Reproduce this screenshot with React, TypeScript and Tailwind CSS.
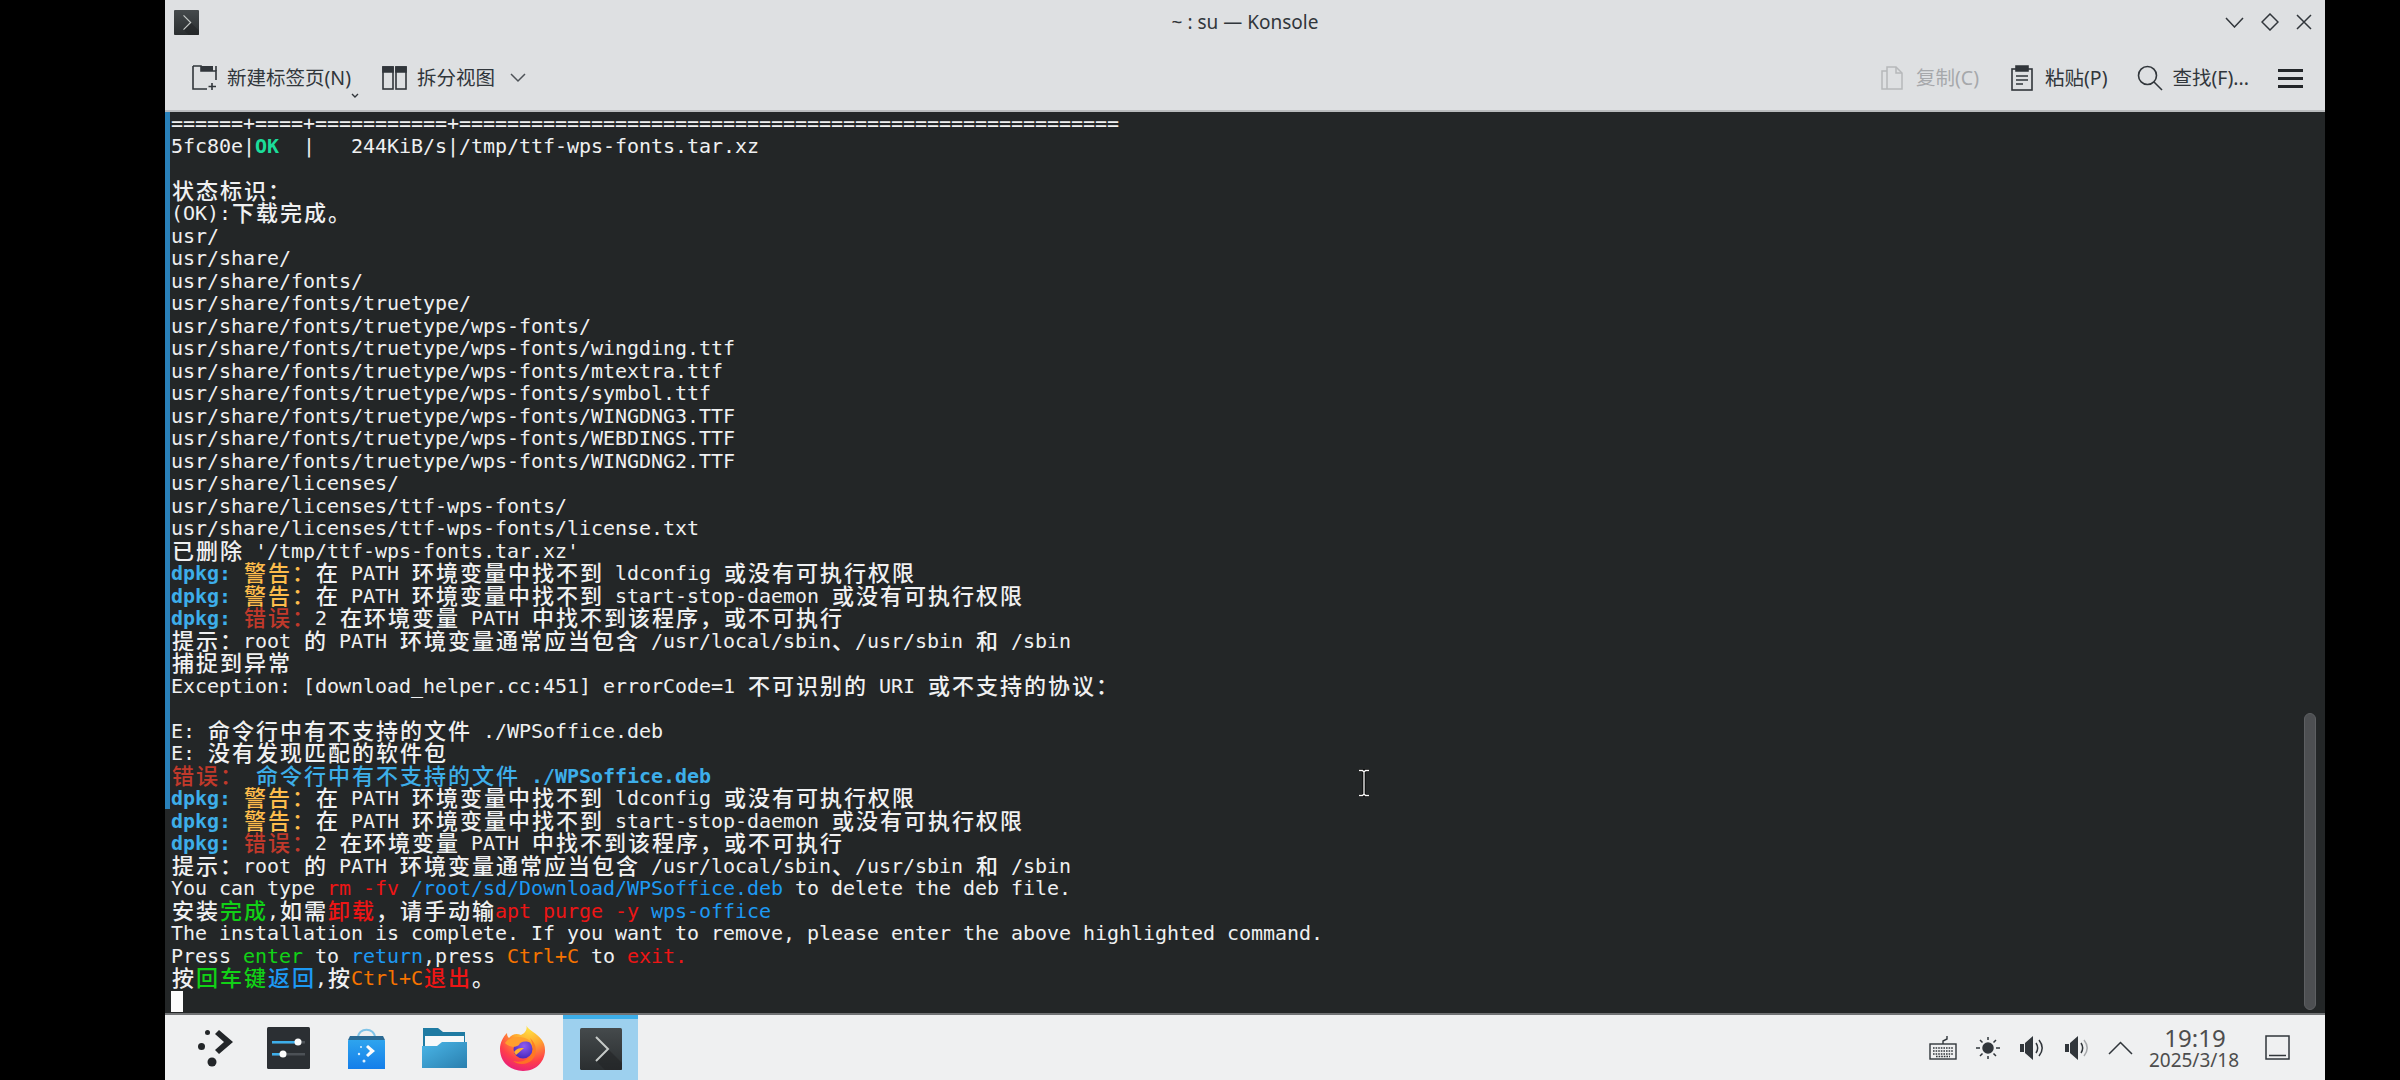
import React from "react";

type Seg = [string, string?];
const B = "text-[#3daee9] font-bold";
const Y = "text-[#fdbc4b] font-bold";
const R = "text-[#c0392b] font-bold";

const warn1: Seg[] = [["dpkg: ", B], ["警告\uFF1A", Y], ["在 PATH 环境变量中找不到 ldconfig 或没有可执行权限"]];
const warn2: Seg[] = [["dpkg: ", B], ["警告\uFF1A", Y], ["在 PATH 环境变量中找不到 start-stop-daemon 或没有可执行权限"]];
const err: Seg[] = [["dpkg: ", B], ["错误\uFF1A", R], ["2 在环境变量 PATH 中找不到该程序\uFF0C或不可执行"]];
const tip: Seg[] = [["提示\uFF1Aroot 的 PATH 环境变量通常应当包含 /usr/local/sbin、/usr/sbin 和 /sbin"]];

const lines: Seg[][] = [
  [["======+====+===========+=======================================================".slice(0, 79)]],
  [["5fc80e|"], ["OK", "text-[#1cdc9a] font-bold"], ["  |   244KiB/s|/tmp/ttf-wps-fonts.tar.xz"]],
  [[""]],
  [["状态标识\uFF1A"]],
  [["(OK):下载完成。"]],
  [["usr/"]],
  [["usr/share/"]],
  [["usr/share/fonts/"]],
  [["usr/share/fonts/truetype/"]],
  [["usr/share/fonts/truetype/wps-fonts/"]],
  [["usr/share/fonts/truetype/wps-fonts/wingding.ttf"]],
  [["usr/share/fonts/truetype/wps-fonts/mtextra.ttf"]],
  [["usr/share/fonts/truetype/wps-fonts/symbol.ttf"]],
  [["usr/share/fonts/truetype/wps-fonts/WINGDNG3.TTF"]],
  [["usr/share/fonts/truetype/wps-fonts/WEBDINGS.TTF"]],
  [["usr/share/fonts/truetype/wps-fonts/WINGDNG2.TTF"]],
  [["usr/share/licenses/"]],
  [["usr/share/licenses/ttf-wps-fonts/"]],
  [["usr/share/licenses/ttf-wps-fonts/license.txt"]],
  [["已删除 '/tmp/ttf-wps-fonts.tar.xz'"]],
  warn1,
  warn2,
  err,
  tip,
  [["捕捉到异常"]],
  [["Exception: [download_helper.cc:451] errorCode=1 不可识别的 URI 或不支持的协议\uFF1A"]],
  [[""]],
  [["E: 命令行中有不支持的文件 ./WPSoffice.deb"]],
  [["E: 没有发现匹配的软件包"]],
  [["错误\uFF1A ", R], ["命令行中有不支持的文件 ./WPSoffice.deb", B]],
  warn1,
  warn2,
  err,
  tip,
  [["You can type "], ["rm -fv ", "text-[#ed1515]"], ["/root/sd/Download/WPSoffice.deb", "text-[#1d99f3]"], [" to delete the deb file."]],
  [["安装"], ["完成", "text-[#11d116]"], [",如需"], ["卸载", "text-[#ed1515]"], ["\uFF0C请手动输"], ["apt purge -y ", "text-[#ed1515]"], ["wps-office", "text-[#1d99f3]"]],
  [["The installation is complete. If you want to remove, please enter the above highlighted command."]],
  [["Press "], ["enter", "text-[#11d116]"], [" to "], ["return", "text-[#1d99f3]"], [",press "], ["Ctrl+C", "text-[#f67400]"], [" to "], ["exit.", "text-[#ed1515]"]],
  [["按"], ["回车键", "text-[#11d116]"], ["返回", "text-[#1d99f3]"], [",按"], ["Ctrl+C", "text-[#f67400]"], ["退出", "text-[#ed1515]"], ["。"]],
];

function Cells({ text }: { text: string }) {
  const parts = text.split(/([\u2e80-\uffff])/).filter(Boolean);
  return (
    <>
      {parts.map((p, i) =>
        p.charCodeAt(0) >= 0x2e80 ? (
          <span key={i} className="inline-block w-[24px] text-center text-[22px] leading-[22px] font-medium tracking-normal translate-y-[1px]">{p}</span>
        ) : (
          <span key={i}>{p}</span>
        )
      )}
    </>
  );
}

function Line({ segs }: { segs: Seg[] }) {
  return (
    <div className="h-[22.5px] leading-[22.5px] whitespace-pre">
      {segs.map((s, i) => (
        <span key={i} className={s[1] ?? ""}><Cells text={s[0]} /></span>
      ))}
    </div>
  );
}

const Ic = "#31363b";

function TermIcon({ size, id }: { size: number; id: string }) {
  return (
    <svg width={size} height={size} viewBox="0 0 42 42" className="shrink-0">
      <defs>
        <linearGradient id={id} x1="0" y1="0" x2="0" y2="1"><stop offset="0" stopColor="#454a4c" /><stop offset="1" stopColor="#2a2e30" /></linearGradient>
      </defs>
      <rect width="42" height="42" rx="1.5" fill={`url(#${id})`} />
      <path d="M16 33 L28 21 L42 35 V42 H25 Z" fill="#202325" opacity="0.55" />
      <path d="M16 9 L28 21 L16 33" fill="none" stroke="#c6cac8" strokeWidth="2" />
    </svg>
  );
}

function Toolbar() {
  return (
    <div className="h-[66px] flex items-center text-[19.5px] text-[#31363b] relative pt-[2px]">
      <svg width="26" height="26" viewBox="0 0 26 26" className="ml-[27px]" fill="none" stroke={Ic} strokeWidth="1.6">
        <path d="M1 1 V24 H15 M1 1 H9 V6 H24 V15" />
        <path d="M9 1 H21 V6 H9Z" fill={Ic} stroke="none" />
        <path d="M24 1 V6" />
        <path d="M20 18 V25 M16.5 21.5 H24" />
      </svg>
      <div className="ml-[9px] relative">
        新建标签页(N)
        <svg width="8" height="6" viewBox="0 0 8 6" className="absolute right-[-8px] bottom-[-6px]" fill="none" stroke="#31363b" strokeWidth="1.4"><path d="M1 1 L4 4 L7 1" /></svg>
      </div>
      <svg width="25" height="24" viewBox="0 0 25 24" className="ml-[31px]" fill="none" stroke={Ic} strokeWidth="1.6">
        <rect x="1" y="1" width="10" height="22" /><rect x="14" y="1" width="10" height="22" />
        <path d="M1 1 H11 V6 H1Z M14 1 H24 V6 H14Z" fill={Ic} />
      </svg>
      <div className="ml-[10px]">拆分视图</div>
      <svg width="16" height="10" viewBox="0 0 16 10" className="ml-[15px]" fill="none" stroke="#4d5257" strokeWidth="1.5"><path d="M1 1 L8 8 L15 1" /></svg>
      <div className="flex-1" />
      <svg width="22" height="24" viewBox="0 0 22 24" fill="none" stroke="#b6b8ba" strokeWidth="1.5">
        <path d="M6 5 V1 H15 L21 7 V23 H6 V5 H1 V23 H6" /><path d="M15 1 V7 H21" />
      </svg>
      <div className="ml-[13px] text-[#a6a8ab]">复制(C)</div>
      <svg width="22" height="26" viewBox="0 0 22 26" className="ml-[32px]" fill="none" stroke={Ic} strokeWidth="1.6">
        <rect x="1" y="4" width="20" height="21" />
        <path d="M5 1 H17 V6 H5Z" fill={Ic} />
        <path d="M5 11 H17 M5 15 H17 M5 19 H12" />
      </svg>
      <div className="ml-[12px]">粘贴(P)</div>
      <svg width="26" height="26" viewBox="0 0 26 26" className="ml-[29px]" fill="none" stroke={Ic} strokeWidth="1.6">
        <circle cx="10.5" cy="10.5" r="9" /><path d="M17 17 L25 25" />
      </svg>
      <div className="ml-[10px]">查找(F)...</div>
      <div className="ml-[29px] mr-[22px] w-[25px] flex flex-col gap-[5px]">
        <div className="h-[3px] bg-[#232629]" /><div className="h-[3px] bg-[#232629]" /><div className="h-[3px] bg-[#232629]" />
      </div>
    </div>
  );
}

function TitleBar() {
  return (
    <div className="h-[44px] grid grid-cols-[1fr_auto_1fr] items-center px-[9px]">
      <div><TermIcon size={25} id="tg1" /></div>
      <div className="text-[19px] text-[#31363b]">~ : su — Konsole</div>
      <div className="flex justify-end items-center pr-[4px] gap-[17px]">
        <svg width="19" height="11" viewBox="0 0 19 11" fill="none" stroke="#31363b" strokeWidth="1.5"><path d="M1 1 L9.5 10 L18 1" /></svg>
        <svg width="18" height="18" viewBox="0 0 18 18" fill="none" stroke="#31363b" strokeWidth="1.5"><path d="M9 1 L17 9 L9 17 L1 9Z" /></svg>
        <svg width="16" height="16" viewBox="0 0 16 16" fill="none" stroke="#31363b" strokeWidth="1.5"><path d="M1 1 L15 15 M15 1 L1 15" /></svg>
      </div>
    </div>
  );
}

function Launcher() {
  return (
    <svg width="37" height="38" viewBox="0 0 37 38">
      <path d="M21 1 L35 13 L21 25 L17 21 L26 13 L17 5 Z" fill="#232629" />
      <circle cx="9.5" cy="3.5" r="2.5" fill="#232629" />
      <circle cx="3.5" cy="17.5" r="3.5" fill="#232629" />
      <circle cx="14" cy="33" r="4.5" fill="#232629" />
    </svg>
  );
}

function SettingsIcon() {
  return (
    <svg width="43" height="42" viewBox="0 0 43 42">
      <rect width="43" height="42" rx="1.5" fill="#2b2f33" />
      <rect x="5" y="14" width="33" height="2.5" fill="#4c5156" />
      <rect x="5" y="14" width="26" height="2.5" fill="#3daee9" />
      <circle cx="31" cy="15" r="3.5" fill="#fcfcfc" />
      <rect x="5" y="26" width="33" height="2.5" fill="#4c5156" />
      <rect x="5" y="26" width="11" height="2.5" fill="#3daee9" />
      <circle cx="16" cy="27" r="3.5" fill="#fcfcfc" />
    </svg>
  );
}

function Discover() {
  return (
    <svg width="37" height="43" viewBox="0 0 37 43">
      <defs><linearGradient id="dg" x1="0" y1="0" x2="0" y2="1"><stop offset="0" stopColor="#2ea4ee" /><stop offset="1" stopColor="#147eea" /></linearGradient></defs>
      <path d="M10 12 C10 1 27 1 27 12" fill="none" stroke="#7fc3e8" strokeWidth="2" />
      <path d="M2 10 H35 L37 14 H0 Z" fill="#2a6a94" />
      <rect y="14" width="37" height="29" rx="0.5" fill="url(#dg)" />
      <path d="M20 19 L27 25 L20 31 L18 29 L22 25 L18 21 Z" fill="#fcfcfc" />
      <circle cx="13" cy="21" r="1" fill="#dcefff" /><circle cx="11" cy="28" r="1.2" fill="#dcefff" /><circle cx="16" cy="35" r="1.5" fill="#dcefff" />
    </svg>
  );
}

function Folder() {
  return (
    <svg width="45" height="41" viewBox="0 0 45 41">
      <defs><linearGradient id="fg" x1="0" y1="0" x2="1" y2="1"><stop offset="0" stopColor="#4ab6e8" /><stop offset="1" stopColor="#2a7fae" /></linearGradient></defs>
      <path d="M1 1 H16 L21 5 H43 V30 H1 Z" fill="#1f7ba3" />
      <rect x="3" y="9" width="39" height="13" fill="#f6f8f9" />
      <path d="M0 19 H15 L20 15 H45 V41 H0 Z" fill="url(#fg)" />
    </svg>
  );
}

function Firefox() {
  return (
    <svg width="46" height="47" viewBox="0 0 46 47">
      <defs>
        <radialGradient id="ff1" cx="0.65" cy="0.05" r="1.05"><stop offset="0" stopColor="#ffe847" /><stop offset="0.38" stopColor="#ffa62e" /><stop offset="0.72" stopColor="#ff3f4a" /><stop offset="1" stopColor="#e31587" /></radialGradient>
        <radialGradient id="ff2" cx="0.55" cy="0.35" r="0.7"><stop offset="0" stopColor="#8f5cf2" /><stop offset="1" stopColor="#4326b8" /></radialGradient>
      </defs>
      <path d="M26 0 C27 7 40 9 44 20 C48 32 40 47 23 47 C9 47 0 37 0 25 C0 19 3 13 7 9 C7 12 8 13 9 14 C12 10 17 9 21 11 C25 9 28 6 26 0 Z" fill="url(#ff1)" />
      <path d="M30 14 C37 20 38 30 32 36 C27 41 18 41 13 37 C20 39 28 37 31 30 C33 25 33 19 30 14 Z" fill="#ff7a1f" opacity="0.85" />
      <circle cx="23" cy="25" r="9.5" fill="url(#ff2)" />
      <path d="M5 19 C10 12 22 11 29 16 C31 18 31 19 31 19 C25 16 20 18 19 21 C15 24 9 23 5 19 Z" fill="#ff9f2e" />
      <path d="M14 28 C17 24 20 24 24 24 L16 31 Z" fill="#ffb02e" />
    </svg>
  );
}

function Tray() {
  const c = "#31363b";
  return (
    <div className="flex items-center">
      <svg width="28" height="24" viewBox="0 0 28 24" fill="none" stroke={c} strokeWidth="1.4">
        <rect x="1" y="8" width="26" height="15" />
        <path d="M14 8 V5 L18 3 V0" />
        <path d="M4 12 H24 M4 15 H24 M4 18 H24 M7 20.5 H21" strokeDasharray="1.6 1" />
      </svg>
      <svg width="24" height="22" viewBox="0 0 24 22" className="ml-[19px]" fill="none" stroke={c} strokeWidth="1.5">
        <circle cx="12" cy="11" r="5" fill={c} />
        <path d="M12 0 V3 M12 19 V22 M0 11 H4 M20 11 H24 M4 3 L6.5 5.5 M20 3 L17.5 5.5 M4 19 L6.5 16.5 M20 19 L17.5 16.5" />
      </svg>
      <svg width="25" height="24" viewBox="0 0 25 24" className="ml-[20px]" fill="none" stroke={c}>
        <path d="M0 8 H4 V16 H0Z M5 7 L13 0 V24 L5 17Z" fill={c} stroke="none" />
        <path d="M16 7 C18 10 18 14 16 17 M19 4 C23 9 23 15 19 20" strokeWidth="1.5" />
      </svg>
      <svg width="25" height="24" viewBox="0 0 25 24" className="ml-[20px]" fill="none" stroke={c}>
        <path d="M0 8 H4 V16 H0Z M5 7 L13 0 V24 L5 17Z" fill={c} stroke="none" />
        <path d="M16 7 C18 10 18 14 16 17" strokeWidth="1.5" />
        <path d="M19 4 C23 9 23 15 19 20" strokeWidth="1.5" stroke="#a6a8ab" />
      </svg>
      <svg width="25" height="14" viewBox="0 0 25 14" className="ml-[18px]" fill="none" stroke={c} strokeWidth="1.5"><path d="M1 13 L12.5 1.5 L24 13" /></svg>
      <div className="ml-[15px] w-[92px] flex flex-col items-center text-[#4d4d4d]">
        <div className="text-[24px] leading-[24px] h-[24px] pl-[2px]">19:19</div>
        <div className="text-[19px] leading-[20px] h-[20px]">2025/3/18</div>
      </div>
      <svg width="25" height="25" viewBox="0 0 25 25" className="ml-[25px]" fill="none" stroke={c} strokeWidth="1.5">
        <rect x="1" y="1" width="23" height="23" /><path d="M4 20.5 H21" />
      </svg>
    </div>
  );
}

export default function App() {
  return (
    <div className="w-[2400px] h-[1080px] bg-black flex overflow-hidden pl-[165px] font-['Noto_Sans','Noto_Sans_CJK_SC',sans-serif]">
      <div className="w-[2160px] h-full flex flex-col">
        <div className="bg-[#dee0e2] border-b-2 border-[#b9bbbd] h-[112px] shrink-0">
          <TitleBar />
          <Toolbar />
        </div>
        <div className="flex-1 relative bg-[#232627] overflow-hidden pl-[6px] text-[20px] tracking-[-0.04px] text-[#eff0f1] font-['DejaVu_Sans_Mono','Noto_Sans_CJK_SC',monospace]">
          <div className="absolute left-0 top-0 w-[5px] h-[697px] bg-[#2980b9]" />
          {lines.map((l, i) => <Line key={i} segs={l} />)}
          <div className="w-[12px] h-[21px] bg-[#fcfcfc] mt-[1px]" />
          <div className="absolute right-[9px] top-[601px] w-[12px] h-[297px] rounded-full bg-[#4d4f52] border border-[#5d5f62]" />
          <svg width="14" height="28" viewBox="0 0 14 28" className="absolute left-[1192px] top-[657px]" fill="none">
            <path d="M2 1.5 H5.5 L7 3 L8.5 1.5 H12 M7 3 V25 M2 26.5 H5.5 L7 25 L8.5 26.5 H12" stroke="#000" strokeWidth="3" />
            <path d="M2 1.5 H5.5 L7 3 L8.5 1.5 H12 M7 3 V25 M2 26.5 H5.5 L7 25 L8.5 26.5 H12" stroke="#fcfcfc" strokeWidth="1.3" />
          </svg>
        </div>
        <div className="h-[67px] shrink-0 bg-[#eff0f1] border-t-2 border-[#707274] flex items-center">
          <div className="ml-[33px]"><Launcher /></div>
          <div className="ml-[32px]"><SettingsIcon /></div>
          <div className="ml-[38px]"><Discover /></div>
          <div className="ml-[37px]"><Folder /></div>
          <div className="ml-[33px]"><Firefox /></div>
          <div className="ml-[17px] w-[75px] h-full bg-[#9dd0ee] border-t-[4px] border-[#3daee9] flex items-center justify-center -mt-[1px]">
            <TermIcon size={42} id="tg2" />
          </div>
          <div className="flex-1" />
          <div className="mr-[35px]"><Tray /></div>
        </div>
      </div>
    </div>
  );
}
